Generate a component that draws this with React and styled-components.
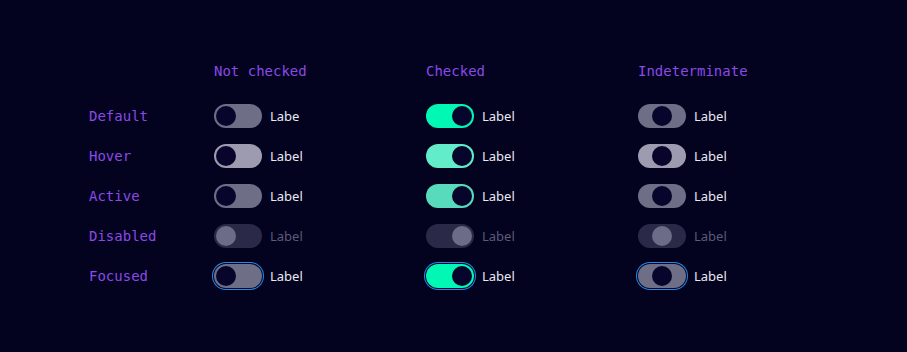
import React from 'react';
import styled, {createGlobalStyle, css} from 'styled-components';

const GlobalStyle = createGlobalStyle`
    html, body {
        margin: 0;
        padding: 0;
        background: #03021f;
    }
`;

const Page = styled.div`
    width: 907px;
    height: 352px;
    box-sizing: border-box;
    padding: 51px 0 0 89px;
    background: #03021f;
`;

const Grid = styled.div`
    display: grid;
    grid-template-columns: 125px 212px 212px 212px;
    grid-template-rows: 45px repeat(5, 40px);
`;

const Heading = styled.div`
    height: 40px;
    line-height: 41px;
    font-family: "DejaVu Sans Mono", "Liberation Mono", monospace;
    font-size: 14px;
    color: #8a4ae6;
    white-space: nowrap;
`;

const Cell = styled.div`
    display: flex;
    align-items: center;
    gap: 8px;
`;

const tracks = {
    off: {default: '#6f6e87', hover: '#9c9bb0', active: '#6f6e87', disabled: '#2a2947', focused: '#6f6e87'},
    on: {default: '#00f7b4', hover: '#62ecc9', active: '#58dbbc', disabled: '#2a2947', focused: '#00f7b4'},
    mixed: {default: '#6f6e87', hover: '#9c9bb0', active: '#6f6e87', disabled: '#2a2947', focused: '#6f6e87'},
};

const Track = styled.span`
    position: relative;
    display: block;
    width: 48px;
    height: 24px;
    border-radius: 12px;
    background: ${p => tracks[p.$mode][p.$state]};
    flex-shrink: 0;
    ${p => p.$state === 'focused' && css`
        box-shadow: 0 0 0 1px #03021f, 0 0 0 2px #2289e8;
    `}
`;

const Knob = styled.span`
    position: absolute;
    top: 2px;
    width: 20px;
    height: 20px;
    border-radius: 50%;
    background: ${p => (p.$disabled ? '#6c6b88' : '#07052b')};
    left: ${p => (p.$mode === 'on' ? '26px' : p.$mode === 'mixed' ? '14px' : '2px')};
`;

const Text = styled.span`
    font-family: "Noto Sans", "Open Sans", sans-serif;
    font-size: 13px;
    color: ${p => (p.$disabled ? '#5c5b78' : '#e9e9f1')};
`;

const states = [
    ['default', 'Default'],
    ['hover', 'Hover'],
    ['active', 'Active'],
    ['disabled', 'Disabled'],
    ['focused', 'Focused'],
];

const modes = ['off', 'on', 'mixed'];

const Toggle = ({mode, state, label}) => {
    const disabled = state === 'disabled';
    return (
        <Cell>
            <Track $mode={mode} $state={state}>
                <Knob $mode={mode} $disabled={disabled}/>
            </Track>
            <Text $disabled={disabled}>{label}</Text>
        </Cell>
    );
};

const App = () => {
    return (
        <Page>
            <GlobalStyle/>
            <Grid>
                <div/>
                <Heading>Not checked</Heading>
                <Heading>Checked</Heading>
                <Heading>Indeterminate</Heading>
                {states.map(([key, name]) => (
                    <React.Fragment key={key}>
                        <Cell><Heading>{name}</Heading></Cell>
                        {modes.map(m => (
                            <Toggle
                                key={m}
                                mode={m}
                                state={key}
                                label={key === 'default' && m === 'off' ? 'Labe' : 'Label'}
                            />
                        ))}
                    </React.Fragment>
                ))}
            </Grid>
        </Page>
    );
};

export default App;
